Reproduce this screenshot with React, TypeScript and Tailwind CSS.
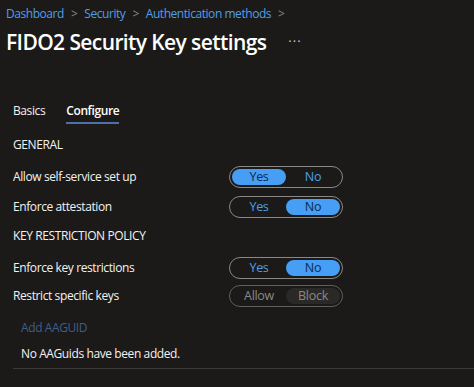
import React from 'react';

type ToggleProps = {
  left: string;
  right: string;
  value: 'left' | 'right';
  disabled?: boolean;
};

function Toggle({ left, right, value, disabled }: ToggleProps) {
  const base = 'flex-1 flex items-center justify-center rounded-full h-full';
  const on = disabled ? 'bg-[#2a2928] text-[#8a8886]' : 'bg-[#479ef5] text-[#0c2a4d]';
  const off = disabled ? 'text-[#8a8886]' : 'text-[#4f9fe8]';
  return (
    <div
      className={`flex w-[114px] h-[22px] rounded-full border p-[2px] text-[12.5px] tracking-[-0.3px] ${
        disabled ? 'border-[#605e5c]' : 'border-[#8a8886]'
      }`}
    >
      <div className={`${base} ${value === 'left' ? on : off}`}>{left}</div>
      <div className={`${base} ${value === 'right' ? on : off}`}>{right}</div>
    </div>
  );
}

function Row({ label, children }: { label: string; children: React.ReactNode }) {
  return (
    <div className="flex items-center h-[22px]">
      <div className="w-[229px] pl-[13px] text-[12px] tracking-[-0.4px] text-[#f3f2f1]">{label}</div>
      {children}
    </div>
  );
}

export default function App() {
  return (
    <div
      className="w-[474px] h-[387px] bg-[#1b1a19] text-white overflow-hidden"
      style={{ fontFamily: '"Open Sans", "Noto Sans", sans-serif' }}
    >
      {/* Header */}
      <div className="pt-[5px] pl-[6px]">
        <div className="flex items-center gap-[7px] text-[12px] leading-[18px] tracking-[-0.45px] text-[#4f9fe8]">
          <span>Dashboard</span>
          <span className="text-[#8a8886]">&gt;</span>
          <span>Security</span>
          <span className="text-[#8a8886]">&gt;</span>
          <span>Authentication methods</span>
          <span className="text-[#8a8886]">&gt;</span>
        </div>
        <div className="flex items-center mt-[5px] h-[28px]">
          <h1 className="text-[21px] font-semibold leading-[28px] tracking-[-0.6px] text-white">
            FIDO2 Security Key settings
          </h1>
          <span className="ml-[22px] text-[13px] text-[#c8c6c4] tracking-[1px]">···</span>
        </div>
      </div>

      {/* Tabs */}
      <div className="flex gap-[21px] pl-[13px] mt-[46px] text-[12px] leading-[18px] tracking-[-0.4px]">
        <div className="pb-[4px] text-[#f3f2f1]">Basics</div>
        <div className="pb-[2px] font-semibold text-white border-b-2 border-[#4f6fa8]">Configure</div>
      </div>

      <div className="pl-[13px] mt-[12px] text-[12px] leading-[18px] tracking-[-0.4px] text-[#f3f2f1]">GENERAL</div>

      <div className="mt-[12px] flex flex-col gap-[8px]">
        <Row label="Allow self-service set up">
          <Toggle left="Yes" right="No" value="left" />
        </Row>
        <Row label="Enforce attestation">
          <Toggle left="Yes" right="No" value="right" />
        </Row>
      </div>

      <div className="pl-[13px] mt-[9px] text-[12px] leading-[18px] tracking-[-0.4px] text-[#f3f2f1]">
        KEY RESTRICTION POLICY
      </div>

      <div className="mt-[12px] flex flex-col gap-[6px]">
        <Row label="Enforce key restrictions">
          <Toggle left="Yes" right="No" value="right" />
        </Row>
        <Row label="Restrict specific keys">
          <Toggle left="Allow" right="Block" value="right" disabled />
        </Row>
      </div>

      <div className="pl-[21px] mt-[12px] text-[12px] leading-[18px] tracking-[-0.4px] text-[#3d5f8c]">Add AAGUID</div>
      <div className="pl-[21px] mt-[8px] text-[12px] leading-[18px] tracking-[-0.4px] text-[#f3f2f1]">
        No AAGuids have been added.
      </div>
      <div className="ml-[13px] mt-[5px] h-px bg-[#3b3a39]" />
    </div>
  );
}
